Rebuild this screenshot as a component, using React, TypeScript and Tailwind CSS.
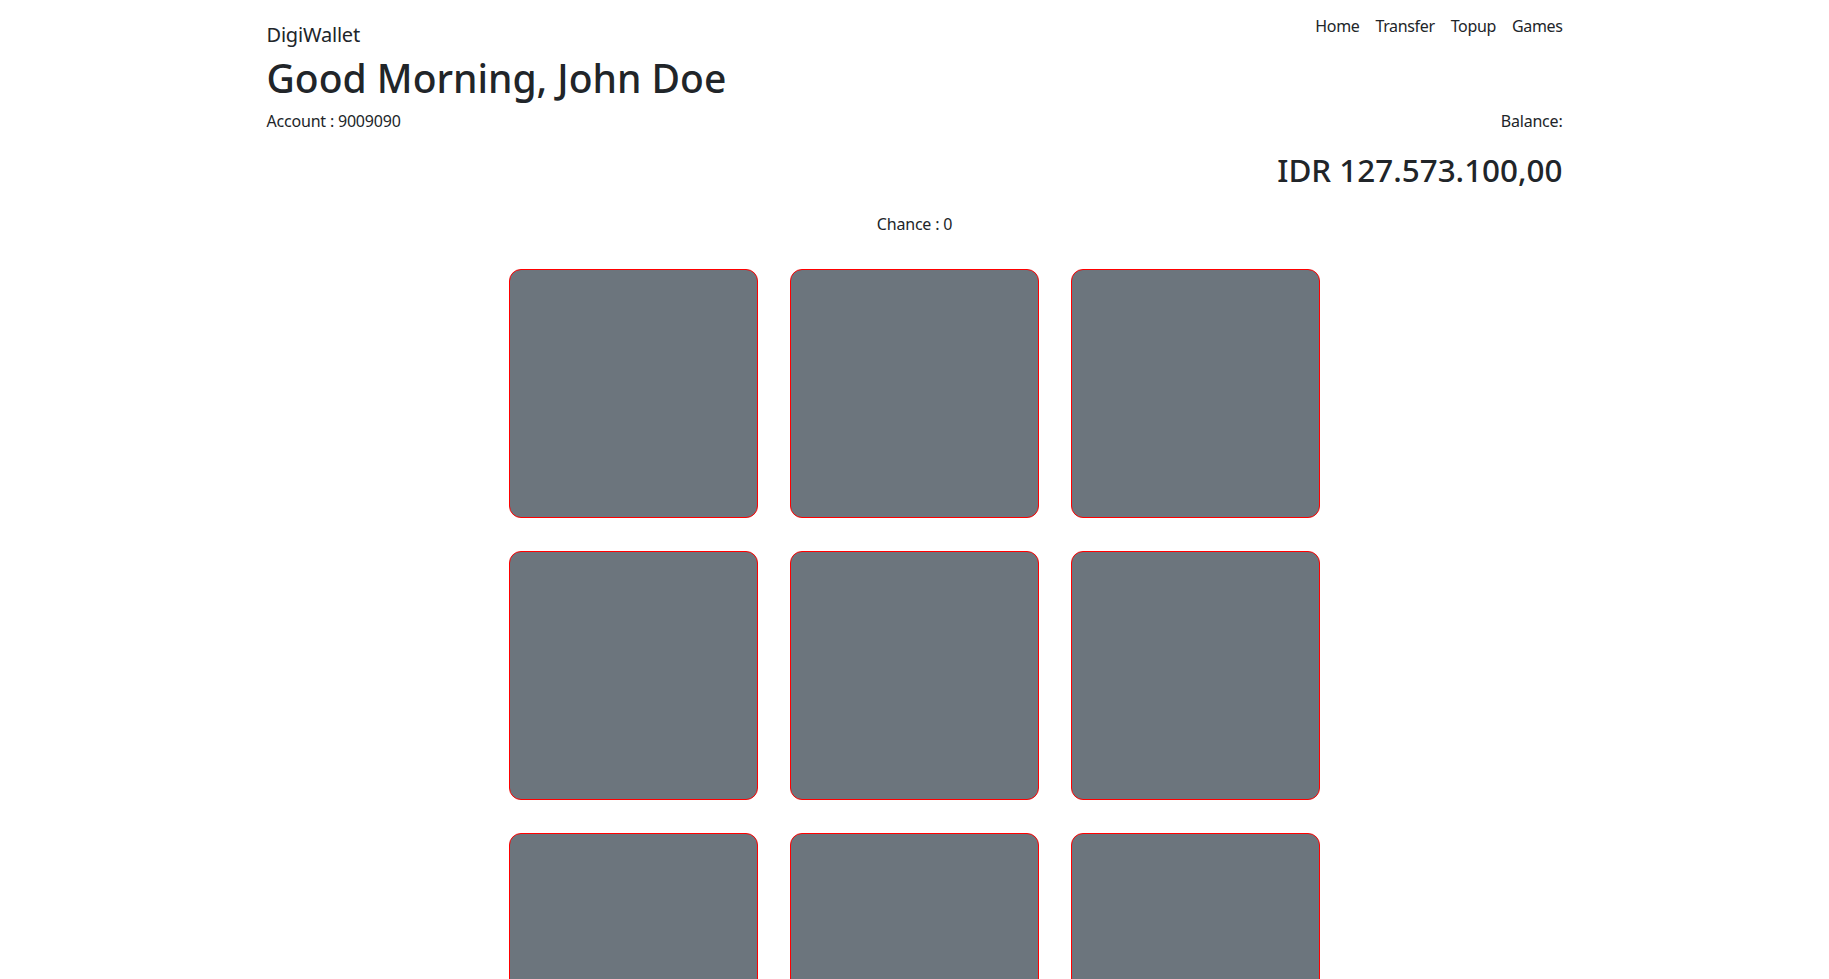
import React from "react";

export default function App() {
  const tiles = Array.from({ length: 9 });
  return (
    <div className="min-h-screen bg-white text-[#212529]" style={{ fontFamily: '"Noto Sans", "Open Sans", sans-serif' }}>
      <div className="w-[1296px] mx-auto">
        <div className="flex justify-between items-start">
          <div className="pt-[20px] text-[20px] leading-[30px] tracking-[-0.2px]">DigiWallet</div>
          <nav className="pt-[14px] flex gap-4 text-[16px] leading-6 tracking-[-0.35px]">
            <a>Home</a>
            <a>Transfer</a>
            <a>Topup</a>
            <a>Games</a>
          </nav>
        </div>
        <h1 className="mt-[2px] text-[39px] leading-[52px] font-medium">Good Morning, John Doe</h1>
        <div className="mt-[5px] flex justify-between text-[16px] leading-6 tracking-[-0.2px]">
          <div>Account : 9009090</div>
          <div>Balance:</div>
        </div>
        <div className="mt-[17px] text-right text-[31.4px] leading-[40px] font-medium">IDR 127.573.100,00</div>
        <div className="mt-[22px] text-center text-[16px] leading-6 tracking-[-0.2px]">Chance : 0</div>
      </div>
      <div className="mt-[33px] mx-auto w-[812px] grid grid-cols-3 gap-x-8 gap-y-[33px]">
        {tiles.map((_, i) => (
          <div key={i} className="h-[249px] rounded-xl border border-[#ff0000] bg-[#6c757d]" />
        ))}
      </div>
    </div>
  );
}
